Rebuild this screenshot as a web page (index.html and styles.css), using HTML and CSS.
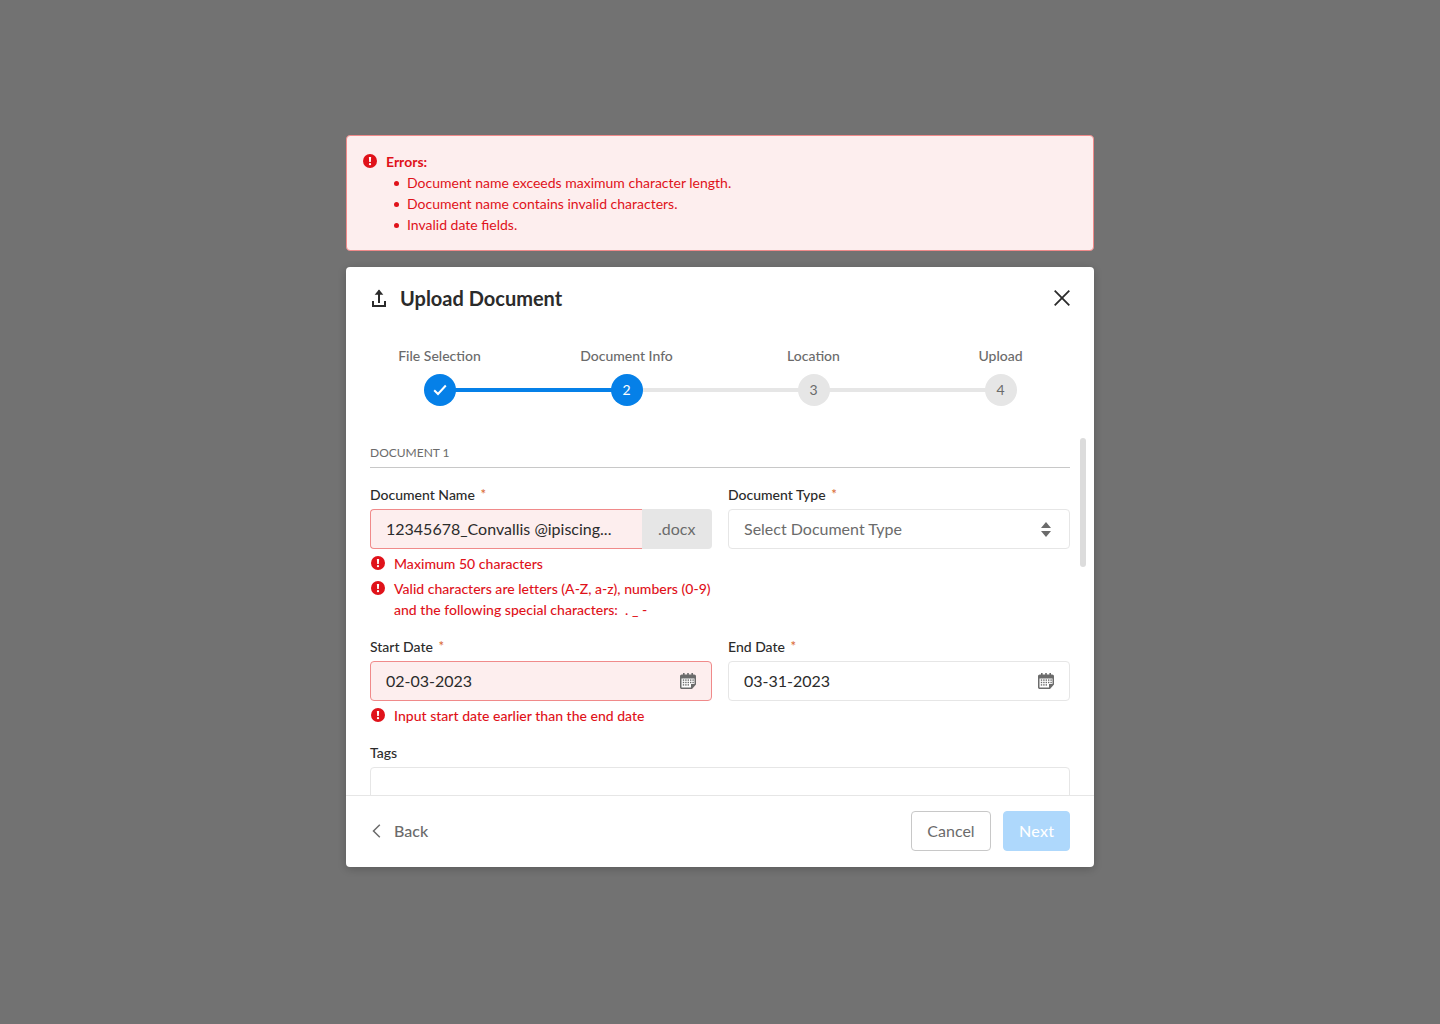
FILE: index.html
```html
<!DOCTYPE html>
<html lang="en">
<head>
<meta charset="utf-8">
<title>Upload Document</title>
<link rel="stylesheet" href="styles.css">
</head>
<body>
<svg class="sprite" width="0" height="0" aria-hidden="true">
  <symbol id="err" viewBox="0 0 14 14">
    <circle cx="7" cy="7" r="7" fill="#e0121a"/>
    <path d="M5.900 2.900h2.200l-.3 5H6.200z" fill="#fff"/>
    <circle cx="7" cy="10.200" r="1.150" fill="#fff"/>
  </symbol>
  <symbol id="cal" viewBox="0 0 16 16">
    <path fill="#6b6b6b" d="M3 0h1.600v1.600h2.600V0h1.600v1.600h2.600V0H13v1.600h1.200c1 0 1.800.8 1.800 1.800v8.200L12 16H1.800C.8 16 0 15.200 0 14.200V3.400c0-1 .8-1.800 1.800-1.800H3z"/>
    <path fill="#fff" d="M1.500 5.500h13v5.500h-3.500v3.500h-9.500z"/>
    <g fill="#6b6b6b">
      <rect x="2.800" y="6.400" width="1.400" height="1.400"/><rect x="5.200" y="6.400" width="1.400" height="1.400"/><rect x="7.600" y="6.400" width="1.400" height="1.400"/><rect x="10" y="6.400" width="1.400" height="1.400"/><rect x="12.400" y="6.400" width="1.400" height="1.400"/>
      <rect x="2.800" y="8.800" width="1.400" height="1.400"/><rect x="5.200" y="8.800" width="1.400" height="1.400"/><rect x="7.600" y="8.800" width="1.400" height="1.400"/><rect x="10" y="8.800" width="1.400" height="1.400"/><rect x="12.400" y="8.800" width="1.400" height="1.400"/>
      <rect x="2.800" y="11.200" width="1.400" height="1.400"/><rect x="5.200" y="11.200" width="1.400" height="1.400"/><rect x="7.600" y="11.200" width="1.400" height="1.400"/>
    </g>
  </symbol>
</svg>

<main class="overlay">
  <section class="alert">
    <svg class="err-icon alert-icon"><use href="#err"/></svg>
    <div class="alert-text">
      <p class="alert-title">Errors:</p>
      <ul class="alert-list">
        <li>Document name exceeds maximum character length.</li>
        <li>Document name contains invalid characters.</li>
        <li>Invalid date fields.</li>
      </ul>
    </div>
  </section>

  <section class="modal">
    <header class="modal-head">
      <svg class="upload-icon" viewBox="0 0 14 18" width="14" height="18">
        <path d="M7 14V1.500" stroke="#2b2b2b" stroke-width="2" fill="none"/>
        <path d="M2.700 5.800 7 .6l4.300 5.200z" fill="#2b2b2b"/>
        <path d="M1 12v5h12v-5" stroke="#2b2b2b" stroke-width="2" fill="none"/>
      </svg>
      <h1 class="modal-title">Upload Document</h1>
      <button class="close" aria-label="Close">
        <svg viewBox="0 0 16 16" width="16" height="16"><path d="M.7.7l14.600 14.600M15.300.7.7 15.300" stroke="#2b2b2b" stroke-width="1.800" fill="none"/></svg>
      </button>
    </header>

    <ol class="stepper">
      <li class="step step-done">
        <span class="step-label">File Selection</span>
        <span class="step-dot"><svg viewBox="0 0 14 12" width="14" height="12"><path d="M1.200 6.300 5 10 12.800 1.500" stroke="#fff" stroke-width="2" fill="none"/></svg></span>
      </li>
      <li class="step step-current">
        <span class="step-label">Document Info</span>
        <span class="step-dot">2</span>
      </li>
      <li class="step">
        <span class="step-label">Location</span>
        <span class="step-dot">3</span>
      </li>
      <li class="step">
        <span class="step-label">Upload</span>
        <span class="step-dot">4</span>
      </li>
    </ol>

    <div class="modal-body">
      <h2 class="section-title">DOCUMENT 1</h2>

      <div class="row">
        <div class="field">
          <label class="label">Document Name <span class="req">*</span></label>
          <div class="input-group">
            <div class="input input-error input-joined"><span>12345678_Convallis @ipiscing...</span></div>
            <div class="suffix">.docx</div>
          </div>
          <div class="msg"><svg class="err-icon"><use href="#err"/></svg><span>Maximum 50 characters</span></div>
          <div class="msg"><svg class="err-icon"><use href="#err"/></svg><span>Valid characters are letters (A-Z, a-z), numbers (0-9)<br>and the following special characters:&nbsp; . _ -</span></div>
        </div>
        <div class="field">
          <label class="label">Document Type <span class="req">*</span></label>
          <div class="input input-placeholder">
            <span>Select Document Type</span>
            <svg viewBox="0 0 10 15" width="10" height="15"><path d="M5 0l5 6H0zM5 15 0 9h10z" fill="#6b6b6b"/></svg>
          </div>
        </div>
      </div>

      <div class="row">
        <div class="field">
          <label class="label">Start Date <span class="req">*</span></label>
          <div class="input input-error">
            <span>02-03-2023</span>
            <svg class="cal-icon"><use href="#cal"/></svg>
          </div>
          <div class="msg"><svg class="err-icon"><use href="#err"/></svg><span>Input start date earlier than the end date</span></div>
        </div>
        <div class="field">
          <label class="label">End Date <span class="req">*</span></label>
          <div class="input">
            <span>03-31-2023</span>
            <svg class="cal-icon"><use href="#cal"/></svg>
          </div>
        </div>
      </div>

      <div class="row">
        <div class="field field-wide">
          <label class="label">Tags</label>
          <div class="input"></div>
        </div>
      </div>

      <div class="scroll-thumb"></div>
    </div>

    <footer class="modal-foot">
      <button class="back">
        <svg viewBox="0 0 9 14" width="9" height="14"><path d="M7.800.8 1.500 7l6.300 6.200" stroke="#6b6b6b" stroke-width="1.500" fill="none"/></svg>
        <span>Back</span>
      </button>
      <div class="actions">
        <button class="btn btn-outline">Cancel</button>
        <button class="btn btn-primary">Next</button>
      </div>
    </footer>
  </section>
</main>
</body>
</html>
```
FILE: styles.css
```css
* { box-sizing: border-box; }
html, body { margin: 0; height: 100%; }
body {
  background: #727272;
  font-family: Lato, "Open Sans", sans-serif;
  color: #2b2b2b;
  overflow: hidden;
}
.sprite { position: absolute; }
.overlay {
  display: flex;
  flex-direction: column;
  align-items: center;
  gap: 16px;
  padding-top: 135px;
}

/* Alert */
.alert {
  width: 748px;
  height: 116px;
  display: flex;
  gap: 9px;
  padding: 15px 16px;
  background: #fdeeee;
  border: 1px solid #f08a8a;
  border-radius: 4px;
  color: #e0121a;
  font-size: 14px;
  line-height: 21px;
}
.err-icon { width: 14px; height: 14px; flex: none; }
.alert-icon { margin-top: 3px; }
.alert-title { margin: 0; font-weight: 700; }
.alert-list { margin: 0; padding: 0 0 0 21px; list-style: none; }
.alert-list li::before {
  content: "";
  display: inline-block;
  width: 5px;
  height: 5px;
  margin: 0 8px 2px -13px;
  border-radius: 50%;
  background: #e0121a;
}

/* Modal */
.modal {
  width: 748px;
  height: 600px;
  display: flex;
  flex-direction: column;
  background: #fff;
  border-radius: 4px;
  box-shadow: 0 2px 8px rgba(0, 0, 0, .2);
}
.modal-head {
  display: flex;
  align-items: center;
  height: 32px;
  margin: 16px 24px 0;
}
.upload-icon { flex: none; margin: -2px 0 0 2px; }
.modal-title {
  margin: -2px 0 0 14px;
  font-size: 20px;
  line-height: 32px;
  font-weight: 700;
  flex: 1;
}
.close {
  display: flex;
  padding: 0;
  border: 0;
  background: none;
  margin-top: -2px;
}

/* Stepper */
.stepper {
  display: grid;
  grid-template-columns: repeat(4, 187px);
  list-style: none;
  margin: 31px 0 0;
  padding: 0;
  height: 60px;
}
.step {
  position: relative;
  display: flex;
  flex-direction: column;
  align-items: center;
  gap: 8px;
}
.step:not(:last-child)::after {
  content: "";
  position: absolute;
  left: 50%;
  width: 100%;
  top: 42px;
  height: 4px;
  background: #e6e6e6;
}
.step-done:not(:last-child)::after { background: #0580e8; }
.step-label {
  font-size: 14px;
  line-height: 20px;
  color: #6b6b6b;
  font-weight: 500;
}
.step-dot {
  position: relative;
  z-index: 1;
  width: 32px;
  height: 32px;
  padding-bottom: 1px;
  border-radius: 50%;
  display: flex;
  align-items: center;
  justify-content: center;
  background: #e6e6e6;
  color: #6b6b6b;
  font-size: 14px;
}
.step-done .step-dot, .step-current .step-dot {
  background: #0580e8;
  color: #fff;
}

/* Body */
.modal-body {
  position: relative;
  flex: 1;
  min-height: 0;
  overflow: hidden;
  margin-top: 32px;
  padding: 7px 24px 0;
}
.section-title {
  margin: 0;
  padding-bottom: 6px;
  border-bottom: 1px solid #c8c8c8;
  font-size: 12px;
  line-height: 16px;
  font-weight: 400;
  color: #6b6b6b;
}
.row {
  display: grid;
  grid-template-columns: 1fr 1fr;
  gap: 16px;
  margin-top: 16px;
}
.field-wide { grid-column: 1 / -1; }
.label {
  display: block;
  font-size: 14px;
  line-height: 21px;
  margin-bottom: 4px;
  font-weight: 500;
}
.req {
  color: #d9662e;
  font-size: 13px;
  line-height: 0;
  vertical-align: 1px;
  margin-left: 2px;
}
.input {
  height: 40px;
  display: flex;
  align-items: center;
  justify-content: space-between;
  padding: 0 15px;
  background: #fff;
  border: 1px solid #e6e6e6;
  border-radius: 4px;
  font-size: 16px;
}
.input > span { margin-bottom: 2px; }
.input-error {
  background: #fdeeee;
  border-color: #f08a8a;
}
.input-placeholder { color: #6b6b6b; padding-right: 18px; }
.cal-icon { width: 16px; height: 16px; flex: none; }
.input-group { display: flex; }
.input-joined {
  flex: 1;
  border-right: 0;
  border-radius: 4px 0 0 4px;
  white-space: nowrap;
}
.suffix {
  width: 70px;
  height: 40px;
  display: flex;
  align-items: center;
  padding: 0 0 2px 16px;
  background: #e6e6e6;
  border-radius: 0 4px 4px 0;
  font-size: 16px;
  color: #6b6b6b;
}
.msg {
  display: flex;
  gap: 9px;
  margin-top: 4px;
  padding-left: 1px;
  color: #e0121a;
  font-size: 14px;
  line-height: 21px;
  font-weight: 500;
  letter-spacing: .02px;
}
.msg .err-icon { margin-top: 3px; }
.scroll-thumb {
  position: absolute;
  left: 734px;
  top: 0;
  width: 6px;
  height: 129px;
  border-radius: 3px;
  background: #dcdcdc;
}

/* Footer */
.modal-foot {
  flex: none;
  height: 72px;
  display: flex;
  align-items: center;
  justify-content: space-between;
  padding: 0 24px 2px;
  border-top: 1px solid #e6e6e6;
}
.back {
  display: flex;
  align-items: center;
  gap: 13px;
  padding: 0 0 0 2px;
  border: 0;
  background: none;
  font: inherit;
  font-size: 16px;
  font-weight: 500;
  color: #6b6b6b;
}
.actions { display: flex; gap: 12px; }
.btn {
  height: 40px;
  padding: 0 15px;
  border-radius: 4px;
  font: inherit;
  font-size: 16px;
}
.btn-outline {
  width: 80px;
  background: #fff;
  border: 1px solid #c8c8c8;
  color: #6b6b6b;
}
.btn-primary {
  width: 67px;
  background: #aed8fc;
  border: 1px solid #aed8fc;
  color: #fff;
  font-weight: 500;
  letter-spacing: .3px;
}
```
